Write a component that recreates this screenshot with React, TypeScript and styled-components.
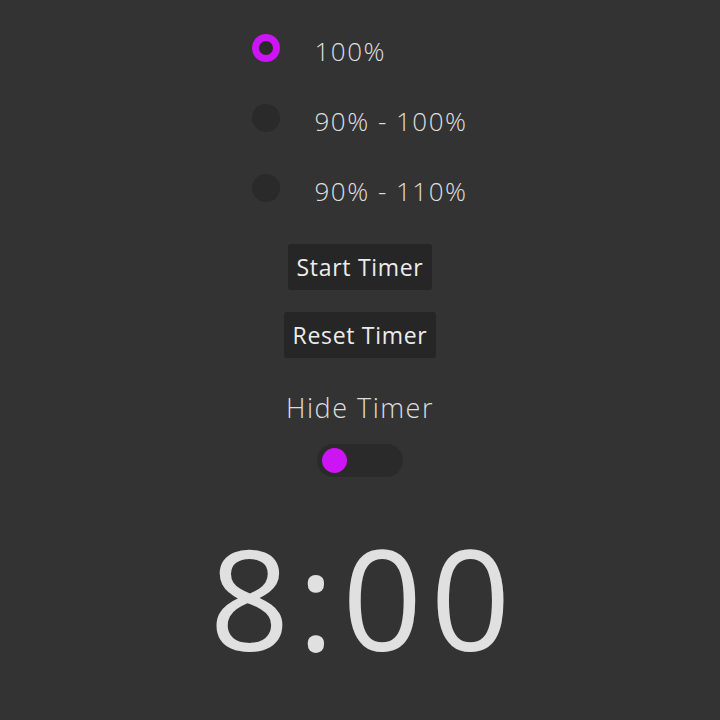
import { useState } from "react";
import styled, { createGlobalStyle } from "styled-components";

const GlobalStyle = createGlobalStyle`
  body {
    margin: 0;
    background: #333333;
    font-family: "Open Sans", "DejaVu Sans", sans-serif;
    color: #dedede;
  }
`;

const Page = styled.div`
  min-height: 720px;
  display: flex;
  flex-direction: column;
  align-items: center;
  padding-top: 16px;
  box-sizing: border-box;
`;

const RadioGroup = styled.div`
  display: flex;
  flex-direction: column;
`;

const RadioRow = styled.label`
  height: 70px;
  display: flex;
  align-items: center;
  gap: 34px;
  cursor: pointer;
`;

const RadioDot = styled.span<{ $checked: boolean }>`
  width: 28px;
  height: 28px;
  box-sizing: border-box;
  border-radius: 50%;
  margin-top: -6px;
  background: #2a2a2a;
  border: ${(p) => (p.$checked ? "7px solid #cc14f5" : "none")};
`;

const RadioLabel = styled.span`
  font-size: 26px;
  font-weight: 300;
  letter-spacing: 1.5px;
`;

const Button = styled.button`
  margin-top: 18px;
  padding: 0 9px;
  height: 46px;
  background: #262626;
  border: none;
  border-radius: 3px;
  color: #ececec;
  font-family: "Open Sans", "DejaVu Sans", sans-serif;
  font-size: 23px;
  font-weight: 500;
  letter-spacing: 0.7px;
  cursor: pointer;

  & + & {
    margin-top: 22px;
  }
`;

const ToggleTitle = styled.div`
  margin-top: 31px;
  font-size: 27px;
  font-weight: 300;
  letter-spacing: 1.5px;
`;

const Track = styled.button`
  margin-top: 18px;
  width: 86px;
  height: 33px;
  border: none;
  border-radius: 17px;
  background: #2a2a2a;
  padding: 0 5px;
  display: flex;
  align-items: center;
  cursor: pointer;
`;

const Knob = styled.span<{ $on: boolean }>`
  width: 25px;
  height: 25px;
  border-radius: 50%;
  background: #cc14f5;
  margin-left: ${(p) => (p.$on ? "51px" : "0")};
`;

const Clock = styled.div`
  margin-top: 50px;
  padding-left: 8px;
  font-size: 140px;
  font-weight: 400;
  letter-spacing: 8px;
  line-height: 1;
  color: #e0e0e0;
`;

const options = ["100%", "90% - 100%", "90% - 110%"];

export default function App() {
  const [choice, setChoice] = useState(0);
  const [hidden, setHidden] = useState(false);

  return (
    <Page>
      <GlobalStyle />
      <RadioGroup>
        {options.map((o, i) => (
          <RadioRow key={o} onClick={() => setChoice(i)}>
            <RadioDot $checked={choice === i} />
            <RadioLabel>{o}</RadioLabel>
          </RadioRow>
        ))}
      </RadioGroup>
      <Button>Start Timer</Button>
      <Button>Reset Timer</Button>
      <ToggleTitle>Hide Timer</ToggleTitle>
      <Track onClick={() => setHidden(!hidden)}>
        <Knob $on={hidden} />
      </Track>
      <Clock>8:00</Clock>
    </Page>
  );
}
